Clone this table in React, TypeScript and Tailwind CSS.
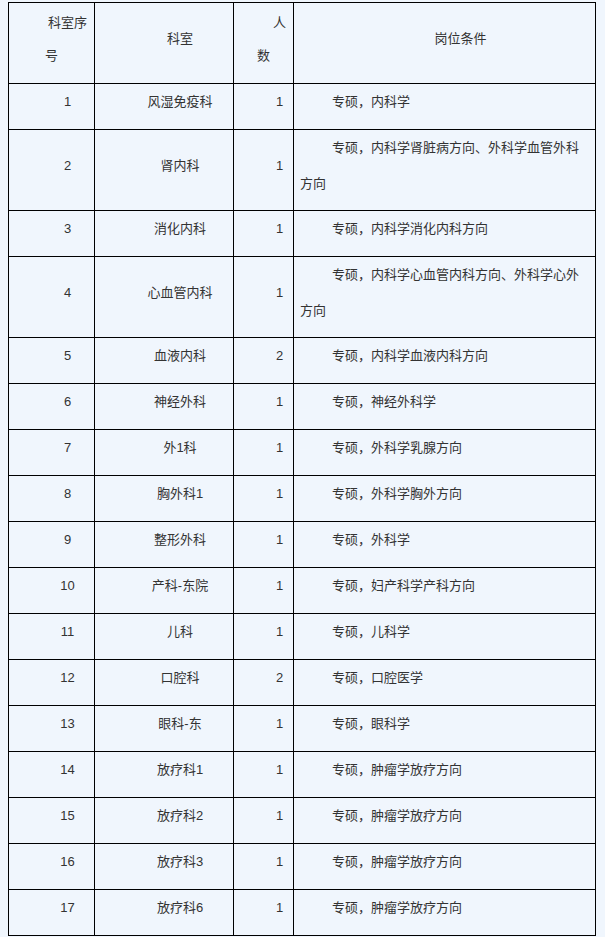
import React from "react";

const rows: [string, string, string, string][] = [
  ["1", "风湿免疫科", "1", "专硕，内科学"],
  ["2", "肾内科", "1", "专硕，内科学肾脏病方向、外科学血管外科方向"],
  ["3", "消化内科", "1", "专硕，内科学消化内科方向"],
  ["4", "心血管内科", "1", "专硕，内科学心血管内科方向、外科学心外方向"],
  ["5", "血液内科", "2", "专硕，内科学血液内科方向"],
  ["6", "神经外科", "1", "专硕，神经外科学"],
  ["7", "外1科", "1", "专硕，外科学乳腺方向"],
  ["8", "胸外科1", "1", "专硕，外科学胸外方向"],
  ["9", "整形外科", "1", "专硕，外科学"],
  ["10", "产科-东院", "1", "专硕，妇产科学产科方向"],
  ["11", "儿科", "1", "专硕，儿科学"],
  ["12", "口腔科", "2", "专硕，口腔医学"],
  ["13", "眼科-东", "1", "专硕，眼科学"],
  ["14", "放疗科1", "1", "专硕，肿瘤学放疗方向"],
  ["15", "放疗科2", "1", "专硕，肿瘤学放疗方向"],
  ["16", "放疗科3", "1", "专硕，肿瘤学放疗方向"],
  ["17", "放疗科6", "1", "专硕，肿瘤学放疗方向"],
];

function HeadCell({ children, px = "px-[5px]" }: { children: React.ReactNode; px?: string }) {
  return (
    <div className={`bg-[#f0f6fd] h-[80px] flex items-center pb-[9px] ${px}`}>
      <div className="w-full text-center indent-[32px] leading-[33px]">{children}</div>
    </div>
  );
}

function Cell({
  children,
  left = false,
  tall = false,
}: {
  children: React.ReactNode;
  left?: boolean;
  tall?: boolean;
}) {
  const pad = tall && left ? "pb-[8px]" : "pb-[9px]";
  return (
    <div
      className={`bg-[#f0f6fd] flex items-center ${pad} ${tall ? "h-[80px]" : ""} ${
        left ? "px-[6px]" : "px-[5px]"
      }`}
    >
      <div className={`w-full indent-[32px] leading-[36px] ${left ? "text-left" : "text-center"}`}>
        {children}
      </div>
    </div>
  );
}

export default function App() {
  return (
    <div
      className="min-h-screen w-full bg-[#f0f6fd] pt-[2px] pl-[8px] text-[13px] text-[#333333]"
      style={{ fontFamily: '"Liberation Sans", "Noto Sans CJK SC", sans-serif' }}
    >
      <div className="grid grid-cols-[85px_138px_59px_301px] gap-px bg-black border border-black w-[588px]">
        <HeadCell>科室序号</HeadCell>
        <HeadCell>科室</HeadCell>
        <HeadCell>人数</HeadCell>
        <HeadCell px="px-[6px]">岗位条件</HeadCell>
        {rows.map((r) => {
          const tall = r[0] === "2" || r[0] === "4";
          return (
            <React.Fragment key={r[0]}>
              <Cell tall={tall}>{r[0]}</Cell>
              <Cell tall={tall}>{r[1]}</Cell>
              <Cell tall={tall}>{r[2]}</Cell>
              <Cell tall={tall} left>
                {r[3]}
              </Cell>
            </React.Fragment>
          );
        })}
      </div>
    </div>
  );
}
